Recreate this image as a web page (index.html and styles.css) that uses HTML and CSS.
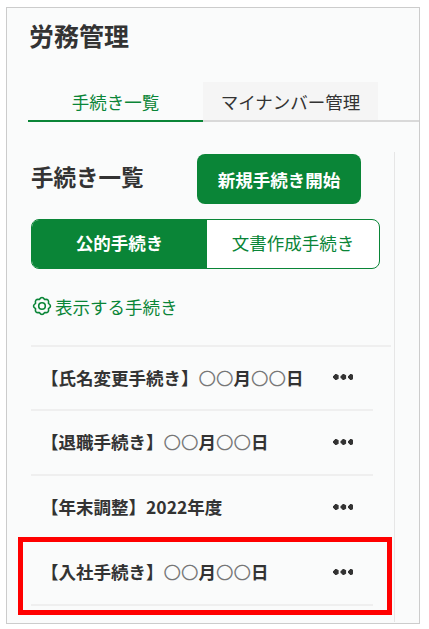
FILE: index.html
```html
<!DOCTYPE html>
<html lang="ja">
<head>
    <meta charset="UTF-8">
    <meta name="viewport" content="width=device-width, initial-scale=1.0">
    <title>労務管理</title>
    <link rel="stylesheet" href="styles.css">
</head>
<body>
    <div class="frame">
        <h1 class="page-title">労務管理</h1>

        <!-- タブ -->
        <div class="tabs">
            <div class="tab active">手続き一覧</div>
            <div class="tab">マイナンバー管理</div>
        </div>

        <div class="panel">
            <div class="panel-head">
                <h2>手続き一覧</h2>
                <button class="start-btn">新規手続き開始</button>
            </div>

            <div class="segment">
                <div class="seg on">公的手続き</div>
                <div class="seg">文書作成手続き</div>
            </div>

            <a class="filter">
                <svg class="gear" viewBox="0 0 20 20" width="20" height="20" fill="none" stroke="#0a8537" stroke-width="1.6" stroke-linejoin="round">
                    <path d="M16.47 7.32Q20.5 10 16.47 12.68Q17.4 17.4 12.68 16.47Q10 20.5 7.32 16.47Q2.6 17.4 3.53 12.68Q-.5 10 3.53 7.32Q2.6 2.6 7.32 3.53Q10 -.5 12.68 3.53Q17.4 2.6 16.47 7.32Z"/>
                    <circle cx="10" cy="10" r="3.3"/>
                </svg>
                表示する手続き
            </a>

            <ul class="list">
                <li class="first"><span>【氏名変更手続き】<b class="mark">〇〇</b>月<b class="mark">〇〇</b>日</span><i class="dots"></i></li>
                <li><span>【退職手続き】<b class="mark">〇〇</b>月<b class="mark">〇〇</b>日</span><i class="dots"></i></li>
                <li><span>【年末調整】2022年度</span><i class="dots"></i></li>
                <li><span>【入社手続き】<b class="mark">〇〇</b>月<b class="mark">〇〇</b>日</span><i class="dots"></i></li>
            </ul>
        </div>

        <div class="highlight"></div>
    </div>
</body>
</html>
```

FILE: styles.css
```css
/* 全体 */
html, body { margin: 0; background: #ffffff; }
body { font-family: "Noto Sans CJK JP", "Noto Sans", sans-serif; color: #333333; }
.frame { position: relative; box-sizing: border-box; width: 414px; height: 617px; margin: 7px 0 0 6px; padding: 0 0 0 22px; background: #fafbfb; border: 1px solid #cccccc; overflow: hidden; }

/* 見出し */
.page-title { margin: 0; padding-top: 11px; height: 61px; box-sizing: border-box; font-size: 25px; line-height: 32px; font-weight: 700; }

/* タブ */
.tabs { display: flex; height: 38px; border-bottom: 2px solid #d9d9d9; margin: 13px 0 0 -1px; }
.tab { width: 175px; height: 38px; box-sizing: border-box; padding-top: 5px; text-align: center; font-size: 17.5px; line-height: 30px; background: #f5f5f5; }
.tab.active { background: none; color: #0a8537; border-bottom: 2px solid #0a8537; height: 40px; }

/* パネル */
.panel { width: 364px; box-sizing: border-box; margin: 30px 0 0 2px; height: 470px; border-right: 1px solid #e6e6e6; }
.panel-head { display: flex; align-items: center; height: 54px; margin-bottom: 13px; }
.panel-head h2 { margin: 0 0 6px; width: 166px; font-size: 22.5px; line-height: 32px; font-weight: 700; }
.start-btn { width: 164px; height: 50px; border: none; border-radius: 8px; background: #0a8537; color: #ffffff; font-family: inherit; font-size: 17.5px; font-weight: 700; }

/* 切替 */
.segment { display: flex; width: 349px; height: 50px; box-sizing: border-box; border: 1.5px solid #0a8537; border-radius: 8px; overflow: hidden; background: #ffffff; }
.seg { flex: 1; text-align: center; font-size: 17.5px; line-height: 46px; color: #0a8537; }
.seg.on { flex: 0 0 175px; background: #0a8537; color: #ffffff; font-weight: 700; }

.filter { display: flex; align-items: center; gap: 3px; height: 30px; margin-top: 22px; padding-left: 1px; font-size: 17.5px; color: #0a8537; }

/* 一覧 */
.list { list-style: none; width: 360px; margin: 24px 0 0; padding: 0; border-top: 2px solid #efefef; }
.list li { display: flex; align-items: center; justify-content: space-between; width: 342px; height: 65px; box-sizing: border-box; border-bottom: 2px solid #efefef; padding: 0 20px 2px 10px; font-size: 17.5px; font-weight: 700; }
.list li.first { height: 64px; }
.mark { font-weight: 400; color: #777777; }
.dots { display: block; width: 20px; height: 6px; background: radial-gradient(circle at 3px 3px, #333 2.6px, transparent 3px) 0 0 / 7.5px 6px repeat-x; }

/* 強調枠 */
.highlight { position: absolute; left: 11px; top: 529px; width: 364px; height: 68px; border: 5px solid #ff0000; }
```
